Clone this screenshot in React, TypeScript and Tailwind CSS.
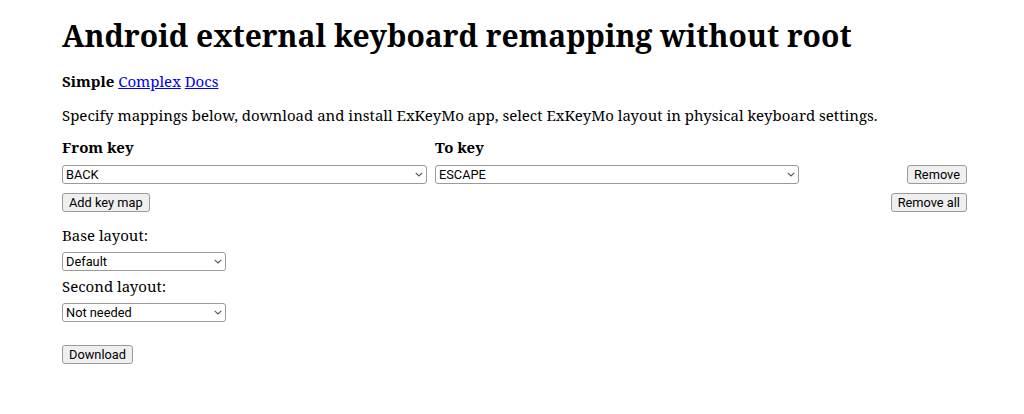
const keyCodes = ['BACK', 'ESCAPE', 'ENTER', 'TAB', 'SPACE', 'DEL', 'HOME', 'MENU'];

const serif = { fontFamily: '"Noto Serif", "DejaVu Serif", serif' };

const buttonCls =
  "h-[19px] px-[6px] border border-[#9a9a9a] rounded-[3px] bg-[#efefef] text-[12.8px] leading-[17px] text-black font-['Roboto',sans-serif]";

const Select = ({ options, value, className }: { options: string[]; value: string; className: string }) => (
  <div className={`relative h-[19px] ${className}`}>
    <select
      className="block appearance-none w-full h-full border border-[#9a9a9a] rounded-[3px] bg-white text-[12.8px] leading-[17px] pl-[3px] text-black font-['Roboto',sans-serif]"
      defaultValue={value}
    >
      {options.map((o) => (
        <option key={o}>{o}</option>
      ))}
    </select>
    <svg
      className="absolute right-[4px] top-[7px] pointer-events-none"
      width="8"
      height="5"
      viewBox="0 0 8 5"
      fill="none"
    >
      <path d="M0.7 0.8 L4 4 L7.3 0.8" stroke="#555" strokeWidth="1.1" />
    </svg>
  </div>
);

const App = () => {
  return (
    <div className="w-[1024px] h-[414px] bg-white text-black" style={serif}>
      <div className="ml-[62px] w-[905px] pt-[18px] flex flex-col">
        <h1 className="text-[30px] leading-[36px] font-bold">Android external keyboard remapping without root</h1>

        <div className="mt-[16px] text-[15px] leading-[22px]">
          <b>Simple</b>{' '}
          <a href="#" className="text-[#0000ee] underline">Complex</a>{' '}
          <a href="#" className="text-[#0000ee] underline">Docs</a>
        </div>

        <p className="mt-[12px] text-[15px] leading-[22px]">
          Specify mappings below, download and install ExKeyMo app, select ExKeyMo layout in physical keyboard settings.
        </p>

        <div className="mt-[10px] grid grid-cols-[365px_364px_1fr] gap-x-[8px]">
          <div className="text-[15px] leading-[22px] font-bold">From key</div>
          <div className="text-[15px] leading-[22px] font-bold">To key</div>
          <div />

          <Select className="mt-[7px] w-full" options={keyCodes} value="BACK" />
          <Select className="mt-[7px] w-full" options={keyCodes} value="ESCAPE" />
          <div className="mt-[7px] flex justify-end">
            <button className={buttonCls}>Remove</button>
          </div>

          <div className="mt-[9px] flex">
            <button className={buttonCls}>Add key map</button>
          </div>
          <div />
          <div className="mt-[9px] flex justify-end">
            <button className={buttonCls}>Remove all</button>
          </div>
        </div>

        <label className="mt-[12px] text-[15px] leading-[22px]">Base layout:</label>
        <Select className="mt-[6px] w-[164px]" options={['Default', 'English (US)']} value="Default" />

        <label className="mt-[4px] text-[15px] leading-[22px]">Second layout:</label>
        <Select className="mt-[6px] w-[164px]" options={['Not needed', 'Russian']} value="Not needed" />

        <div className="mt-[23px] flex">
          <button className={buttonCls}>Download</button>
        </div>
      </div>
    </div>
  );
};

export default App;
